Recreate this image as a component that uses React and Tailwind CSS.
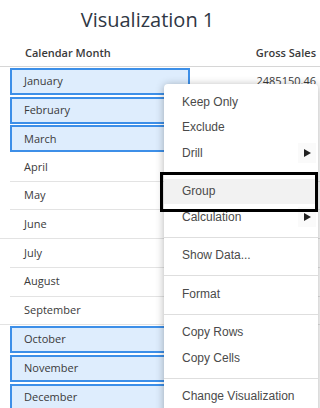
import React from 'react';

const months = [
  { name: 'January', sel: true, value: '2485150.46' },
  { name: 'February', sel: true },
  { name: 'March', sel: true },
  { name: 'April' },
  { name: 'May' },
  { name: 'June', fullLine: true },
  { name: 'July' },
  { name: 'August' },
  { name: 'September', fullLine: true },
  { name: 'October', sel: true },
  { name: 'November', sel: true },
  { name: 'December', sel: true },
];

const menu = [
  ['Keep Only', 'Exclude', { label: 'Drill', sub: true }],
  [{ label: 'Group', active: true }, { label: 'Calculation', sub: true }],
  ['Show Data...'],
  ['Format'],
  ['Copy Rows', 'Copy Cells'],
  ['Change Visualization'],
];

function Row({ m }) {
  if (m.sel) {
    return (
      <div className="h-[28.7px] flex">
        <div className="ml-[10px] mt-[1px] w-[180px] h-[27px] border-2 border-[#3d8fe8] bg-[#deedfd] flex items-center pl-[12px]">
          {m.name}
        </div>
        <div className="flex-1 flex items-center justify-end pr-[4px]">{m.value}</div>
      </div>
    );
  }
  return (
    <div className={'h-[28.7px] flex border-b border-[#e3e3e3] ' + (m.fullLine ? '' : 'ml-[10px]')}>
      <div className={'w-[180px] flex items-center ' + (m.fullLine ? 'ml-[10px] pl-[14px]' : 'pl-[14px]')}>{m.name}</div>
      <div className="flex-1" />
    </div>
  );
}

function Arrow() {
  return (
    <span className="w-[18px] h-[20px] bg-[#fafafa] flex items-center justify-center">
      <svg width="7" height="8" viewBox="0 0 7 8">
        <path d="M0 0 L7 4 L0 8 Z" fill="#222" />
      </svg>
    </span>
  );
}

export default function App() {
  return (
    <div className="relative w-[320px] h-[408px] overflow-hidden bg-white text-[#333] font-['Open_Sans',sans-serif]">
      <div className="h-[40px] pr-[25px] flex items-center justify-center text-[20px] text-[#2f3744]">
        Visualization 1
      </div>
      <div className="h-[27px] flex items-center border-b border-[#d6d6d6] text-[11px] font-semibold text-[#3a3a3a]">
        <div className="ml-[10px] w-[180px] pl-[15px]">Calendar Month</div>
        <div className="flex-1 text-right pr-[4px]">Gross Sales</div>
      </div>
      <div className="text-[11px] text-[#3a3a3a]">
        {months.map((m) => (
          <Row key={m.name} m={m} />
        ))}
      </div>

      <div className="absolute left-[164px] top-[84px] w-[154px] h-[340px] bg-white rounded-[4px] shadow-[0_1px_9px_rgba(0,0,0,0.3)] pt-[5px] font-['Liberation_Sans',Arial,sans-serif] text-[12px] text-[#4a4a4a]">
        {menu.map((group, gi) => (
          <div key={gi}>
            {gi > 0 && <div className="mt-[7px] mb-[5px] h-px bg-[#dedede]" />}
            {group.map((it) => {
              const item = typeof it === 'string' ? { label: it } : it;
              return (
                <div
                  key={item.label}
                  className={'h-[25.5px] flex items-center justify-between pl-[18px] pr-[2px] ' + (item.active ? 'bg-[#f2f2f2]' : '')}
                >
                  <span>{item.label}</span>
                  {item.sub && <Arrow />}
                </div>
              );
            })}
          </div>
        ))}
        <div className="absolute left-[-4px] top-[88px] w-[158px] h-[40px] border-[3px] border-black" />
      </div>
    </div>
  );
}
